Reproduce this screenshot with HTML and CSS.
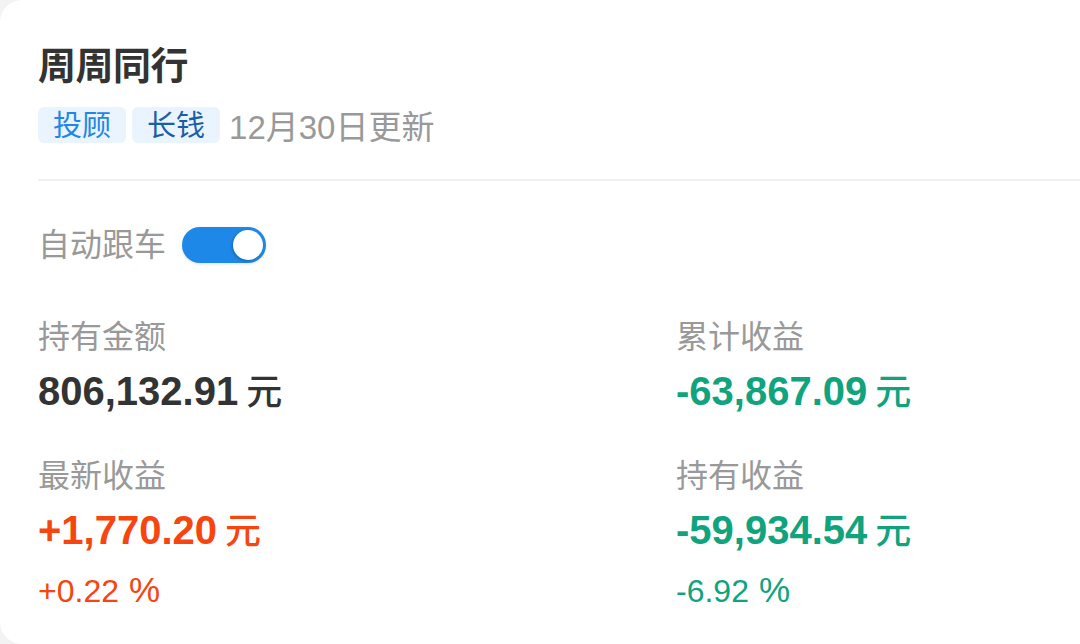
FILE: index.html
```html
<!DOCTYPE html>
<html lang="zh-CN">
<head>
<meta charset="utf-8">
<title>周周同行</title>
<link rel="stylesheet" href="styles.css">
</head>
<body>
<div class="card">
  <div class="title">周周同行</div>
  <div class="meta">
    <span class="tag tag-blue">投顾</span>
    <span class="tag tag-navy">长钱</span>
    <span class="date">12月30日更新</span>
  </div>
  <div class="divider"></div>
  <div class="auto">
    <span class="auto-label">自动跟车</span>
    <span class="toggle"><span class="knob"></span></span>
  </div>
  <div class="stats">
    <div class="cell">
      <div class="label">持有金额</div>
      <div class="value">806,132.91<span class="unit">元</span></div>
    </div>
    <div class="cell">
      <div class="label">累计收益</div>
      <div class="value green">-63,867.09<span class="unit">元</span></div>
    </div>
    <div class="cell">
      <div class="label">最新收益</div>
      <div class="value red">+1,770.20<span class="unit">元</span></div>
      <div class="pct red">+0.22<span class="pct-sign">%</span></div>
    </div>
    <div class="cell">
      <div class="label">持有收益</div>
      <div class="value green">-59,934.54<span class="unit">元</span></div>
      <div class="pct green">-6.92<span class="pct-sign">%</span></div>
    </div>
  </div>
</div>
</body>
</html>
```
FILE: styles.css
```css
* { box-sizing: border-box; }
html, body { margin: 0; padding: 0; }
body {
  background: #f3f3f3;
  font-family: "Liberation Sans", "Noto Sans CJK SC", sans-serif;
  width: 1080px;
  height: 644px;
  overflow: hidden;
}
.card {
  background: #ffffff;
  border-radius: 22px 0 0 22px;
  height: 644px;
  width: 1080px;
  padding: 43px 0 0 38px;
}
.title {
  font-size: 38px;
  line-height: 46px;
  font-weight: 600;
  color: #333333;
  letter-spacing: -0.5px;
}
.meta {
  display: flex;
  align-items: center;
  gap: 6px;
  margin-top: 18px;
  height: 36px;
}
.tag {
  height: 36px;
  line-height: 36px;
  padding: 1px 15px 0;
  border-radius: 6px;
  background: #eaf4fe;
  font-size: 29px;
}
.tag-blue { color: #1f87e6; }
.tag-navy { color: #1a5ea6; }
.date {
  margin-left: 3px;
  font-size: 33px;
  color: #999999;
}
.divider {
  margin-top: 36px;
  height: 2px;
  background: #f0f0f0;
}
.auto {
  display: flex;
  align-items: center;
  gap: 16px;
  margin-top: 46px;
  height: 36px;
}
.auto-label {
  font-size: 32px;
  line-height: 36px;
  color: #999999;
}
.toggle {
  width: 84px;
  height: 36px;
  border-radius: 18px;
  background: #1e88e8;
  display: flex;
  align-items: center;
  justify-content: flex-end;
  padding-right: 3px;
  box-shadow: 0 1px 3px rgba(0,0,0,0.12);
}
.knob {
  width: 30px;
  height: 30px;
  border-radius: 50%;
  background: #ffffff;
  box-shadow: -1px 1px 3px rgba(0,0,0,0.25);
}
.stats {
  display: grid;
  grid-template-columns: 638px 1fr;
  row-gap: 41px;
  margin-top: 56px;
}
.label {
  font-size: 32px;
  line-height: 36px;
  color: #999999;
}
.value {
  margin-top: 12px;
  font-size: 40px;
  line-height: 48px;
  font-weight: 700;
  color: #333333;
}
.unit {
  margin-left: 8px;
  font-size: 36px;
  font-weight: 500;
}
.pct {
  margin-top: 16px;
  font-size: 32px;
  line-height: 36px;
}
.pct-sign {
  margin-left: 10px;
  font-size: 35px;
}
.green { color: #10a37e; }
.red { color: #f6450f; }
```
